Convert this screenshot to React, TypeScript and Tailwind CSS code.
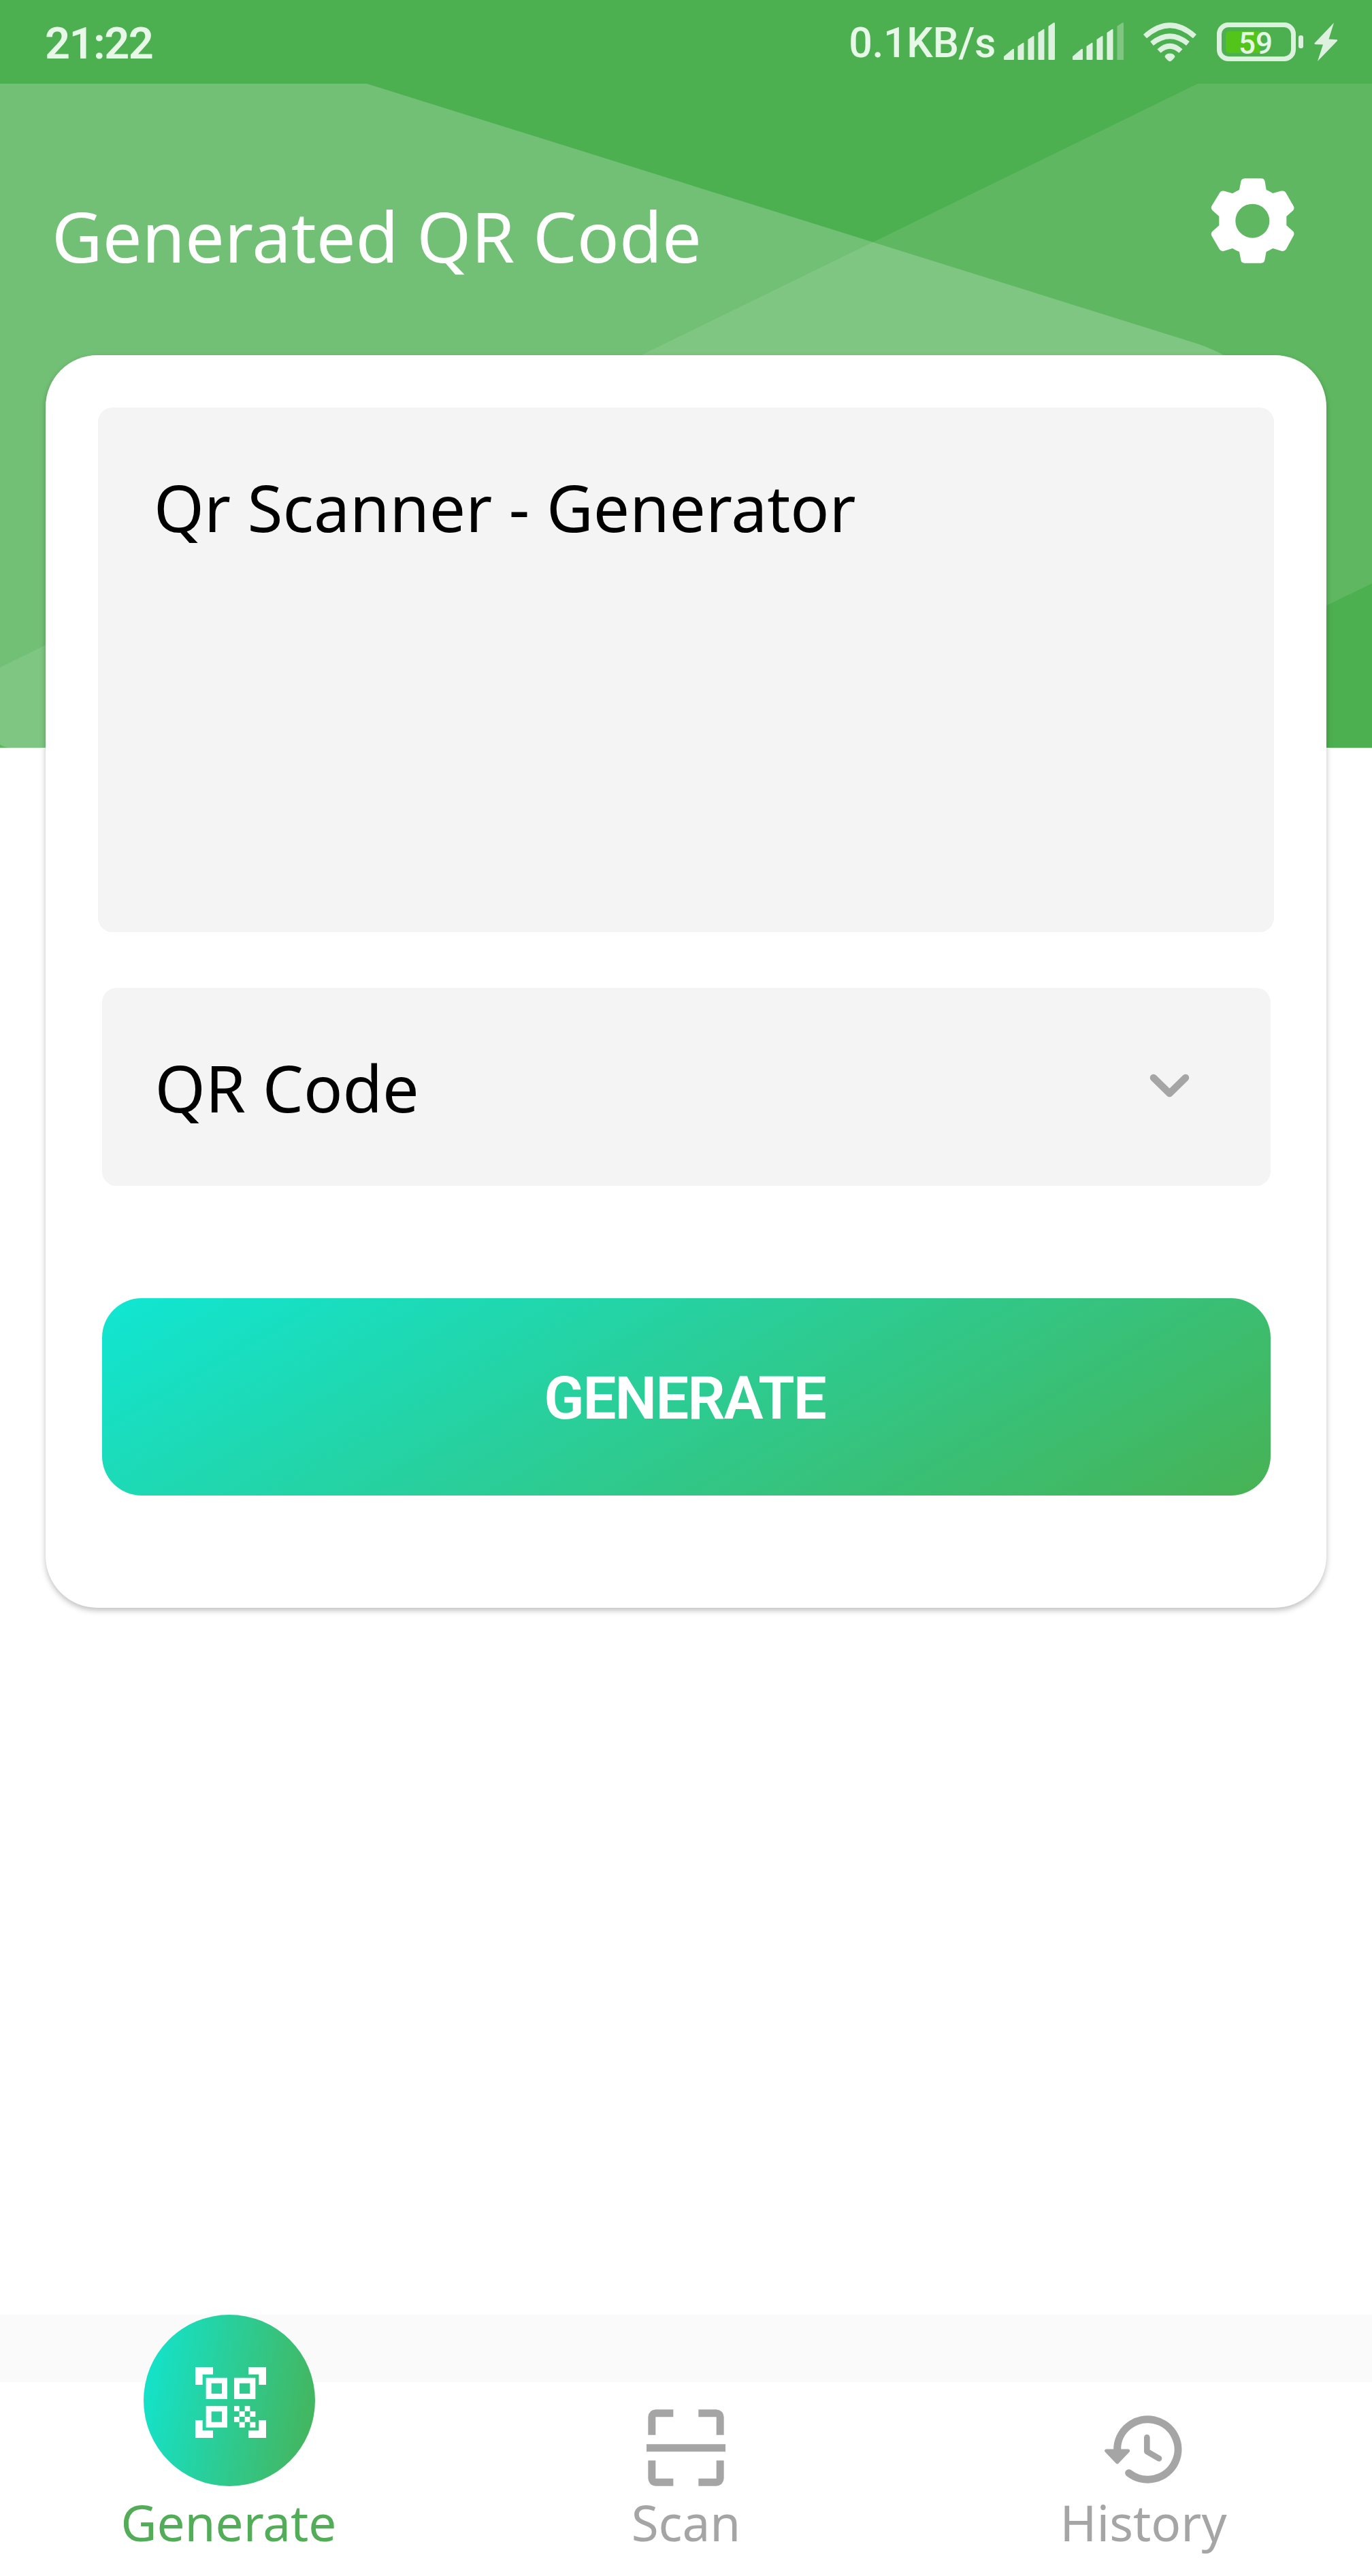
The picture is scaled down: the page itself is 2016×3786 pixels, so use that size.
import React from "react";

function HeaderBackdrop() {
  return (
    <svg
      className="absolute left-0 top-0 h-[1099px] w-full"
      viewBox="0 0 2016 1099"
      fill="none"
      aria-hidden="true"
    >
      <rect width="2016" height="1099" fill="#4DB050" />
      <path
        d="M0 123H539L1762 506Q1784 514 1800 523Q1812 532 1800 560L1640 1099H13Q5 1098 0 1094Z"
        fill="#72C075"
      />
      <path
        d="M1760 123H2016V857.5L1949 890L1520 1099H0V981L67 948L942 522L1281 356.7Z"
        fill="#fff"
        fillOpacity="0.1"
      />
    </svg>
  );
}

function Signal({ weak = false }: { weak?: boolean }) {
  return (
    <svg className="h-[56px] w-[76px]" viewBox="0 0 76 56" fill="#DDF2DE" aria-hidden="true">
      <path d="M0 50L13 39Q15 38 15 40V54Q15 55 14 55H1Q0 55 0 54Z" />
      <path d="M20.5 35L28 30Q29.5 29 29.5 31V54Q29.5 55 28.5 55H21.5Q20.5 55 20.5 54Z" />
      <path d="M35.5 25L43 20Q44.5 19 44.5 21V54Q44.5 55 43.5 55H36.5Q35.5 55 35.5 54Z" />
      <path d="M50.5 15L58 10Q59.5 9 59.5 11V54Q59.5 55 58.5 55H51.5Q50.5 55 50.5 54Z" />
      <path
        d="M65.5 5.5L73 .5Q75 -.5 75 1.5V54Q75 55 74 55H66.5Q65.5 55 65.5 54Z"
        fillOpacity={weak ? 0.35 : 1}
      />
    </svg>
  );
}

function Wifi() {
  return (
    <svg className="h-[58px] w-[80px]" viewBox="1679 33 80 58" fill="none" stroke="#DDF2DE" strokeWidth="7.6" aria-hidden="true">
      <path d="M1682.5 53.5Q1719 21 1755.500 53.5" />
      <path d="M1692.500 64Q1719 42.500 1745.500 64" />
      <path d="M1703 75Q1719 60.500 1735 75" />
      <path d="M1711.500 83Q1713 78.500 1719 78.500Q1725 78.500 1726.500 83Q1726 85 1721 89.500Q1719 91 1717 89.500Q1712 85 1711.500 83Z" fill="#DDF2DE" stroke="none" />
    </svg>
  );
}

function Battery() {
  return (
    <div className="relative flex items-center gap-[4px]">
      <div className="h-[57px] w-[116px] rounded-[17px] border-[7.5px] border-[#DDF2DE] p-[5.5px]">
        <div className="h-full w-[50px] rounded-l-[6px] bg-[#52C41A]" />
      </div>
      <div className="h-[19px] w-[7px] rounded-[3px] bg-[#DDF2DE]" />
      <span className="absolute left-[32px] top-[9px] text-[44px] font-medium leading-none text-[#E4F6E4]">
        59
      </span>
    </div>
  );
}

function Bolt() {
  return (
    <svg className="h-[58px] w-[36px]" viewBox="0 0 36 58" fill="#DDF2DE" aria-hidden="true">
      <path d="M29 .5L.5 30.500Q0 32 2 32.200L13 32.500L5 57L34 27Q35 25.500 33 25.300L21.500 24.500Z" />
    </svg>
  );
}

function StatusBar() {
  return (
    <div className="flex h-[123px] items-start font-['Roboto',sans-serif] text-[#E8F8E8]">
      <span className="ml-[66px] mt-[32px] text-[65px] font-semibold leading-none tracking-[-1.6px]">21:22</span>
      <span className="ml-auto mt-[33px] text-[61px] font-medium leading-none tracking-[-0.4px]">0.1KB/s</span>
      <div className="ml-[12px] mr-[49px] mt-[33px] flex items-start">
        <Signal />
        <div className="ml-[25px]">
          <Signal weak />
        </div>
        <div className="ml-[27px]">
          <Wifi />
        </div>
        <div className="ml-[29px]">
          <Battery />
        </div>
        <div className="ml-[16px]">
          <Bolt />
        </div>
      </div>
    </div>
  );
}

function Gear() {
  return (
    <svg className="h-[170px] w-[160px]" viewBox="0 0 480 510" fill="#fff" aria-hidden="true">
      <path
        fillRule="evenodd"
        d="M189 86Q191 67 207 67H280Q294 67 296 82L302 117Q318 124 331 132L366 122Q382 119 389 131L421 187Q428 197 421 207L391 234V274L421 301Q428 310 421 321L390 378Q382 390 370 387L331 375Q318 383 302 390L295 427Q293 440 279 440H206Q192 440 190 427L183 390Q167 384 153 375L114 387Q102 390 95 378L62 321Q56 310 64 301L94 274V234L64 207Q56 197 62 187L96 131Q103 119 117 122L153 133Q167 124 183 117ZM241 179A75 75 0 1 0 241 329A75 75 0 1 0 241 179Z"
      />
    </svg>
  );
}

function TitleBar() {
  return (
    <div className="flex h-[399px] items-start justify-between pl-[76px] pr-[96px]">
      <h1 className="mt-[172px] text-[102.6px] leading-none text-white">Generated QR Code</h1>
      <button className="mt-[117px]" aria-label="Settings">
        <Gear />
      </button>
    </div>
  );
}

function GeneratorCard() {
  return (
    <section className="ml-[67px] flex h-[1841px] w-[1882px] flex-col rounded-[76px] bg-white px-[77px] pt-[77px] shadow-[0_4px_9px_0px_rgba(0,0,0,0.25)]">
      <div className="h-[771px] rounded-[21px] bg-[#F4F4F4] pl-[82px] pt-[100px]">
        <p className="text-[94.6px] leading-none text-black">Qr Scanner - Generator</p>
      </div>
      <div className="mx-[5.5px] mt-[82px] flex h-[291px] items-start justify-between rounded-[21px] bg-[#F4F4F4] pl-[78px] pr-[119px]">
        <span className="mt-[99px] text-[95.2px] leading-none text-black">QR Code</span>
        <svg className="mt-[126px] h-[37px] w-[59px]" viewBox="0 0 59 37" fill="none" aria-hidden="true">
          <path d="M6 6L29.500 29L53 6" stroke="#A5A5A5" strokeWidth="10.500" strokeLinecap="round" strokeLinejoin="round" />
        </svg>
      </div>
      <button className="mx-[5.5px] mt-[165px] flex h-[290px] items-start justify-center rounded-[58px] bg-[linear-gradient(150deg,#10E6D3,#48B254)] pr-[4px] pt-[104px] font-['Roboto',sans-serif] text-[87px] font-semibold leading-none tracking-[-2px] text-white">
        GENERATE
      </button>
    </section>
  );
}

function QrIcon() {
  return (
    <svg className="h-[104px] w-[104px]" viewBox="0 0 312 312" fill="#fff" aria-hidden="true">
      <path d="M0 0H78V32H32V78H0ZM234 0H312V78H280V32H234ZM0 234H32V280H78V312H0ZM280 234H312V312H234V280H280Z" />
      <path
        fillRule="evenodd"
        d="M47 47H141V141H47ZM71 71V117H117V71ZM171 47H265V141H171ZM195 71V117H241V71ZM47 172H141V266H47ZM71 196V242H117V196Z"
      />
      <path d="M171 172H194V195H171ZM218 172H241V195H218ZM194 195H218V219H194ZM241 195H265V219H241ZM171 219H194V242H171ZM218 219H241V242H218ZM194 242H218V266H194ZM241 242H265V266H241Z" />
    </svg>
  );
}

function ScanIcon() {
  return (
    <svg className="h-[113px] w-[116px]" viewBox="0 0 348 339" fill="#A5A5A5" aria-hidden="true">
      <path d="M7 113V34Q10 3 40 1H118V34H40V113ZM229 1H307Q338 4 341 34V113H308V34H229ZM0 154H348V187H0ZM7 226H40V305H118V338H40Q10 335 7 305ZM308 226H341V305Q338 335 307 338H229V305H308Z" />
    </svg>
  );
}

function HistoryIcon() {
  return (
    <svg className="h-[100px] w-[114px]" viewBox="0 0 342 300" fill="none" stroke="#A5A5A5" strokeLinecap="round" aria-hidden="true">
      <path d="M56 150A134 132.500 0 1 1 107 254" strokeWidth="33" />
      <path d="M187 97V159L240 190" strokeWidth="26" strokeLinejoin="round" />
      <path d="M8 156H104L56 206Z" fill="#A5A5A5" strokeWidth="15" strokeLinejoin="round" />
    </svg>
  );
}

function BottomNav() {
  return (
    <nav className="grid h-[384px] grid-cols-3 bg-[linear-gradient(#FAFAFA_99px,#FFFFFF_99px)] text-[72.8px] leading-none text-[#A5A5A5]">
      <a className="flex flex-col items-center text-[#53AC57]">
        <span className="ml-[1px] flex size-[252px] items-center justify-center rounded-full bg-[linear-gradient(100deg,#10E6D2,#48B256)] pl-[5px] pt-[6px]">
          <QrIcon />
        </span>
        <span className="mt-[17px]">Generate</span>
      </a>
      <a className="flex flex-col items-center pt-[139px]">
        <ScanIcon />
        <span className="mt-[17px]">Scan</span>
      </a>
      <a className="flex flex-col items-center pt-[148px]">
        <HistoryIcon />
        <span className="mt-[21px]">History</span>
      </a>
    </nav>
  );
}

export default function App() {
  return (
    <main className="relative h-[3786px] w-full overflow-hidden bg-white font-['Noto_Sans','Open_Sans',sans-serif]">
      <HeaderBackdrop />
      <div className="relative flex h-full flex-col">
        <StatusBar />
        <TitleBar />
        <GeneratorCard />
        <div className="flex-1" />
        <BottomNav />
      </div>
    </main>
  );
}
